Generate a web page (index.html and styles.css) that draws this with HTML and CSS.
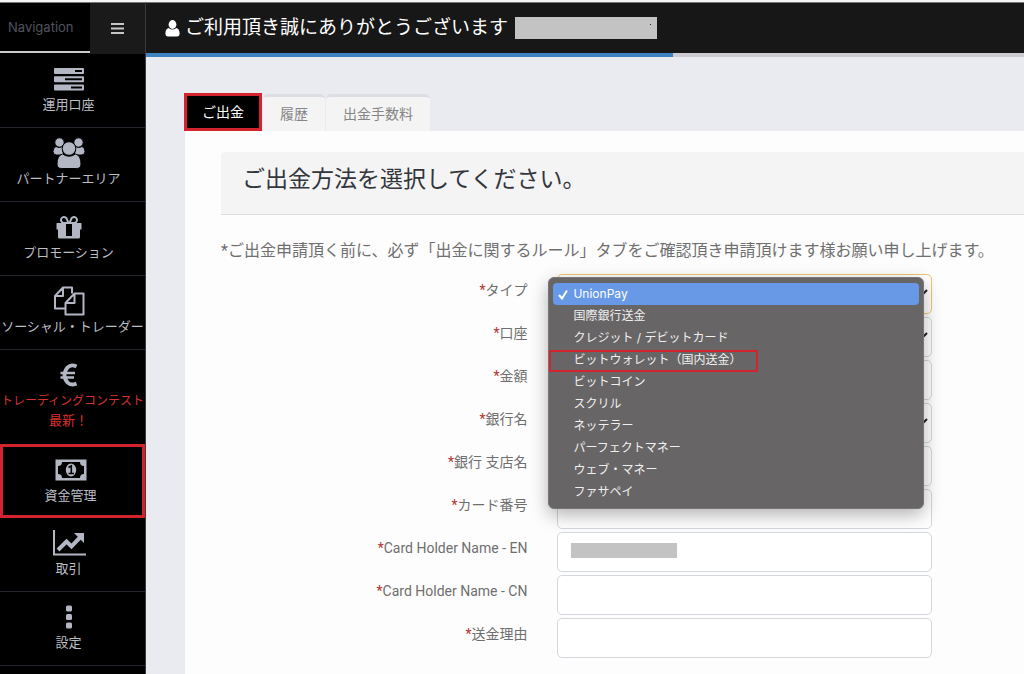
FILE: index.html
```html
<!DOCTYPE html>
<html lang="ja">
<head>
<meta charset="utf-8">
<meta name="viewport" content="width=device-width, initial-scale=1">
<title>ご出金</title>
<link rel="stylesheet" href="styles.css">
</head>
<body>
<div class="app">
  <nav class="sidebar">
    <div class="sidebar-head">
      <span class="sidebar-title">Navigation</span>
      <button class="menu-toggle" type="button" aria-label="メニュー">
        <svg width="13" height="11" viewBox="0 0 13 11" fill="currentColor"><path d="M0 0h13v2H0zM0 4.500h13v2H0zM0 9h13v2H0z"/></svg>
      </button>
    </div>
    <a class="nav-item" href="#">
      <svg class="nav-icon" width="32" height="28" viewBox="0 0 32 28"><path fill="currentColor" fill-rule="evenodd" d="M2 3h28q1 0 1 1v4q0 1-1 1H2q-1 0-1-1V4q0-1 1-1zM22 5v2h7V5zM2 11.200h28q1 0 1 1v4q0 1-1 1H2q-1 0-1-1v-4q0-1 1-1zM12 13.200v2h17v-2zM2 19.500h28q1 0 1 1v4q0 1-1 1H2q-1 0-1-1v-4q0-1 1-1zM18 21.500v2h11v-2z"/></svg>
      <span>運用口座</span>
    </a>
    <a class="nav-item" href="#">
      <svg class="nav-icon" width="32" height="32" viewBox="0 0 32 32"><g fill="currentColor" stroke="#000" stroke-width="1"><path d="M3 9.500q3.500 2 7-.5Q8.500 13 11 18H3.500Q0 18 0 14.500q0-4 3-5zM29 9.500q-3.500 2-7-.5 1.500 4-1 9h7.500q3.500 0 3.500-3.500 0-4-3-5z"/><circle cx="6.500" cy="5.500" r="4.700"/><circle cx="25.500" cy="5.500" r="4.700"/><path d="M9.500 17q6.500 4.500 13 0 5.500 1.500 5.500 10 0 4.500-4.500 4.500h-15Q4 31.500 4 27q0-8.500 5.500-10z"/><circle cx="16" cy="11.500" r="6.800"/></g></svg>
      <span>パートナーエリア</span>
    </a>
    <a class="nav-item" href="#">
      <svg class="nav-icon" width="26" height="28" viewBox="0 0 26 28"><path fill="none" stroke="currentColor" stroke-width="2" d="M12.500 10H8a3 3 0 1 1 2.400-4.800zM13.500 10H18a3 3 0 1 0-2.400-4.800z"/><path fill="currentColor" fill-rule="evenodd" d="M1 10h24q.5 0 .5.5v6H24V24q0 1.500-1.500 1.500h-19Q2 25.500 2 24v-7.500H.5v-6q0-.5.5-.5zM10 11v12h6V11z"/></svg>
      <span>プロモーション</span>
    </a>
    <a class="nav-item nav-item-wide" href="#">
      <svg class="nav-icon" width="32" height="30" viewBox="0 0 32 30" fill="none" stroke="currentColor" stroke-width="2" stroke-linejoin="round"><path d="M12 22.500H2V10l8-8.500h9v6M10 1.500V10H2M12.500 17l9-9.500H30.500v21h-18zM21.500 7.500V17h-9"/></svg>
      <span>ソーシャル・トレーダー</span>
    </a>
    <a class="nav-item nav-item-wide nav-item-new" href="#">
      <svg class="nav-icon" width="18" height="26" viewBox="0 0 18 26" fill="none" stroke="currentColor"><path stroke-width="3.800" d="M16.500 4.500Q11 1.800 7.500 5.500 4.500 9 4.500 13t3 7.500Q11 24 16.500 21.500"/><path stroke-width="2.400" d="M.5 11H15M.5 15.500H14"/></svg>
      <span class="nav-small">トレーディングコンテスト</span>
      <span class="nav-tag">最新！</span>
    </a>
    <a class="nav-item nav-item-active" href="#" aria-current="page">
      <svg class="nav-icon" width="32" height="24" viewBox="0 0 32 24"><path fill="currentColor" fill-rule="evenodd" d="M.5 1.500h31v21H.5zM7 4q0 4-4 4v8q4 0 4 4h18q0-4 4-4V8q-4 0-4-4z"/><ellipse cx="16" cy="12" rx="5.200" ry="6.500" fill="currentColor"/><path d="M13.500 9.500l2.800-1.700V15M13.500 15.500h5.500" fill="none" stroke="#000" stroke-width="1.600"/></svg>
      <span>資金管理</span>
    </a>
    <a class="nav-item" href="#">
      <svg class="nav-icon" width="34" height="26" viewBox="0 0 34 26"><path d="M2 0v24.500h32" fill="none" stroke="currentColor" stroke-width="2"/><path d="M6 20l8.500-8.500 5 5L28.500 7" fill="none" stroke="currentColor" stroke-width="4"/><path d="M22 3h10v10z" fill="currentColor"/></svg>
      <span>取引</span>
    </a>
    <a class="nav-item" href="#">
      <svg class="nav-icon" width="8" height="26" viewBox="0 0 8 26" fill="currentColor"><rect x="1" y="1.500" width="6" height="6" rx="1.500"/><rect x="1" y="10" width="6" height="6" rx="1.500"/><rect x="1" y="18.500" width="6" height="6" rx="1.500"/></svg>
      <span>設定</span>
    </a>
  </nav>

  <div class="main">
    <header class="topbar">
      <svg width="15" height="17" viewBox="0 0 15 17" fill="currentColor"><ellipse cx="7.500" cy="4.500" rx="3.900" ry="4.400"/><path d="M3.600 8q3.900 3 7.800 0Q14.600 8.800 14.600 13.500q0 3-2.600 3H3q-2.600 0-2.600-3Q.4 8.800 3.600 8z"/></svg>
      <span class="greeting">ご利用頂き誠にありがとうございます</span>
      <span class="redacted redacted-name"></span>
    </header>
    <div class="progress"><div class="progress-fill"></div></div>

    <main class="content">
      <div class="tabs" role="tablist">
        <button class="tab tab-active" type="button" role="tab" aria-selected="true">ご出金</button>
        <button class="tab" type="button" role="tab" aria-selected="false">履歴</button>
        <button class="tab" type="button" role="tab" aria-selected="false">出金手数料</button>
      </div>
      <section class="panel">
        <h1 class="panel-title">ご出金方法を選択してください。</h1>
        <p class="note">*ご出金申請頂く前に、必ず「出金に関するルール」タブをご確認頂き申請頂けます様お願い申し上げます。</p>
        <form class="form">
          <div class="row">
            <label for="type"><b>*</b>タイプ</label>
            <div class="field">
              <select class="control control-focus" id="type"><option></option></select>
              <svg class="chevron" width="10" height="7" viewBox="0 0 10 7"><path d="M1 1l4 4 4-4"/></svg>
              <ul class="menu" role="listbox" aria-label="タイプ">
                <li class="option option-selected" role="option" aria-selected="true"><svg class="check" width="10" height="11" viewBox="0 0 10 11"><path d="M1 6l3 3.500L9 1.500"/></svg>UnionPay</li>
                <li class="option" role="option">国際銀行送金</li>
                <li class="option" role="option">クレジット / デビットカード</li>
                <li class="option option-marked" role="option">ビットウォレット（国内送金）</li>
                <li class="option" role="option">ビットコイン</li>
                <li class="option" role="option">スクリル</li>
                <li class="option" role="option">ネッテラー</li>
                <li class="option" role="option">パーフェクトマネー</li>
                <li class="option" role="option">ウェブ・マネー</li>
                <li class="option" role="option">ファサペイ</li>
              </ul>
            </div>
          </div>
          <div class="row">
            <label for="account"><b>*</b>口座</label>
            <div class="field">
              <select class="control" id="account"><option></option></select>
              <svg class="chevron" width="10" height="7" viewBox="0 0 10 7"><path d="M1 1l4 4 4-4"/></svg>
            </div>
          </div>
          <div class="row">
            <label for="amount"><b>*</b>金額</label>
            <div class="field"><input class="control" id="amount" type="text"></div>
          </div>
          <div class="row">
            <label for="bank"><b>*</b>銀行名</label>
            <div class="field">
              <select class="control" id="bank"><option></option></select>
              <svg class="chevron" width="10" height="7" viewBox="0 0 10 7"><path d="M1 1l4 4 4-4"/></svg>
            </div>
          </div>
          <div class="row">
            <label for="branch"><b>*</b>銀行 支店名</label>
            <div class="field"><input class="control" id="branch" type="text"></div>
          </div>
          <div class="row">
            <label for="card"><b>*</b>カード番号</label>
            <div class="field"><input class="control" id="card" type="text"></div>
          </div>
          <div class="row">
            <label for="name-en"><b>*</b>Card Holder Name - EN</label>
            <div class="field"><input class="control" id="name-en" type="text"><span class="redacted redacted-value"></span></div>
          </div>
          <div class="row">
            <label for="name-cn"><b>*</b>Card Holder Name - CN</label>
            <div class="field"><input class="control" id="name-cn" type="text"></div>
          </div>
          <div class="row">
            <label for="reason"><b>*</b>送金理由</label>
            <div class="field"><input class="control" id="reason" type="text"></div>
          </div>
        </form>
      </section>
    </main>
  </div>
</div>
</body>
</html>
```
FILE: styles.css
```css
*, ::after { box-sizing: border-box; }

body {
  margin: 0;
  background: #eaebf0;
  color: #6f6f6f;
  font-family: Roboto, "Noto Sans CJK JP", sans-serif;
  font-size: 14px;
}

button, input, select { font: inherit; }

.app {
  display: flex;
  min-height: 100vh;
  border-top: 2px solid #f6f6f8;
}

/* Sidebar */
.sidebar {
  flex: 0 0 146px;
  min-width: 0;
  background: #000;
  border-top: 1px solid #77777a;
  border-right: 1px solid #3a3a3c;
}

.sidebar-head {
  display: flex;
  height: 51px;
}

.sidebar-title {
  flex: 1;
  margin-bottom: 1px;
  padding-left: 8px;
  border-bottom: 2px solid #c9cacc;
  color: #50535e;
  font-family: Inter, sans-serif;
  font-size: 13px;
  line-height: 48px;
}

.menu-toggle {
  display: flex;
  align-items: center;
  justify-content: center;
  width: 55px;
  padding: 0;
  border: 0;
  background: #1a1a1a;
  color: #c5c7c5;
}

.nav-item {
  display: flex;
  flex-direction: column;
  align-items: center;
  height: 74px;
  padding: 9px 8px 0 0;
  border-bottom: 1px solid #24262d;
  color: #bcbec4;
  font-size: 13px;
  line-height: 20px;
  text-decoration: none;
  white-space: nowrap;
}

.nav-icon {
  flex: none;
  height: 32px;
  color: #b3b7c3;
}

/* Labels as wide as the bar use its full width; the icon keeps its column. */
.nav-item-wide { padding-right: 0; }

.nav-item-wide .nav-icon,
.nav-tag { margin-right: 8px; }

.nav-item-new {
  height: 94px;
  border-bottom: 0;
  color: #d9302c;
}

.nav-small { font-size: 12px; }

.nav-item-active {
  padding: 7px 4px 0 0;
  border: 3px solid #d2232e;
}

/* Header */
.main {
  flex: 1;
  min-width: 0;
}

.topbar {
  display: flex;
  align-items: center;
  height: 51px;
  padding-left: 19px;
  border-top: 1px solid #77777a;
  background: #171717;
  color: #fff;
}

.greeting {
  margin-left: 5px;
  font-size: 19px;
  line-height: 28px;
  white-space: nowrap;
}

.redacted { background: #c3c3c3; }

.redacted-name {
  position: relative;
  width: 142px;
  height: 22px;
  margin-left: 7px;
}

.redacted-name::after {
  position: absolute;
  top: 7px;
  right: 6px;
  width: 1px;
  height: 1px;
  background: #222;
  content: "";
}

.progress {
  height: 4px;
  background: #cccbd0;
}

.progress-fill {
  width: 60%;
  height: 100%;
  background: #3c82c4;
}

/* Tabs */
.content { padding: 36px 0 0 38px; }

.tabs {
  display: flex;
  align-items: flex-end;
  gap: 1px;
}

.tab {
  height: 37px;
  padding: 0 17px;
  border: 0;
  border-top: 3px solid #dcdee3;
  border-radius: 5px 5px 0 0;
  background: #f4f4f4;
  color: #858585;
  line-height: 20px;
}

.tab-active {
  height: 38px;
  padding: 0 15px;
  border: 3px solid #d2232e;
  border-radius: 0;
  background: #000;
  color: #fff;
}

/* Panel */
.panel {
  margin-left: 1px;
  padding: 21px 0 16px 36px;
  background: #fdfdfd;
}

.panel-title {
  margin: 0;
  padding: 11px 21px 18px;
  border-bottom: 1px solid #dcdddf;
  border-radius: 4px 0 0 0;
  background: #f4f4f4;
  color: #33363c;
  font-size: 23px;
  font-weight: 400;
  line-height: 33px;
}

.note {
  margin: 23px 0 10px;
  font-size: 16px;
  line-height: 26px;
  white-space: nowrap;
}

.form {
  display: grid;
  gap: 3px;
  padding-right: 92px;
}

.row {
  display: grid;
  grid-template-columns: 9fr 11fr;
  column-gap: 30px;
}

.row label {
  padding-top: 6px;
  line-height: 20px;
  text-align: right;
}

.row b {
  color: #b8302f;
  font-weight: 400;
}

.field { position: relative; }

.control {
  display: block;
  width: 100%;
  height: 40px;
  padding: 0 12px;
  border: 1px solid #d3d8de;
  border-radius: 5px;
  outline: 0;
  background: #fff;
  appearance: none;
}

.control-focus { border-color: #edc66e; }

.chevron {
  position: absolute;
  top: 15px;
  right: 4px;
  fill: none;
  stroke: #222;
  stroke-width: 2;
}

.redacted-value {
  position: absolute;
  top: 11px;
  left: 14px;
  width: 106px;
  height: 15px;
}

/* Open drop-down list */
.menu {
  position: absolute;
  z-index: 2;
  top: 3px;
  right: 8px;
  left: -9px;
  margin: 0;
  padding: 5px 4px;
  border: 1px solid #77757a;
  border-radius: 6px;
  background: #686566;
  box-shadow: 0 6px 18px rgba(0, 0, 0, 0.3);
  color: #f0f0f0;
  font-family: Inter, "Noto Sans CJK JP", sans-serif;
  font-size: 12px;
  line-height: 22px;
  list-style: none;
}

.option {
  position: relative;
  padding-left: 20px;
}

.option-selected {
  border-radius: 4px;
  background: #6799e6;
  color: #fff;
}

.check {
  position: absolute;
  top: 6px;
  left: 5px;
  fill: none;
  stroke: #fff;
  stroke-width: 2;
}

.option-marked::after {
  position: absolute;
  top: 1px;
  left: -4px;
  width: 209px;
  height: 22px;
  border: 2px solid #d2232e;
  content: "";
}
```
